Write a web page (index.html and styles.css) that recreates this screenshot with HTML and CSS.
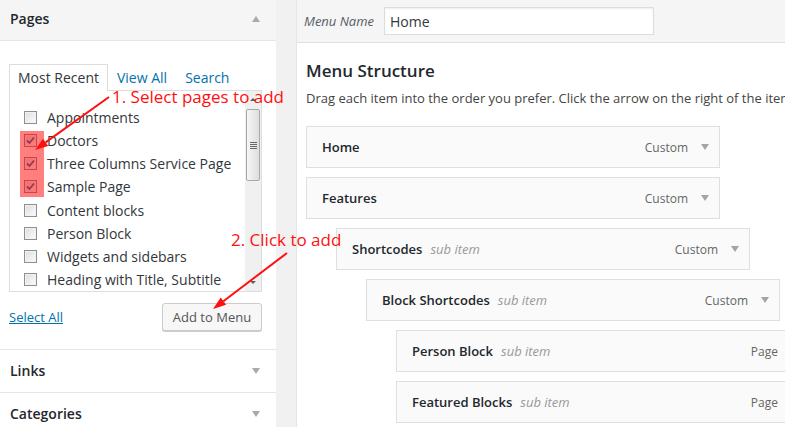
FILE: index.html
```html
<!DOCTYPE html>
<html lang="en">
<head>
<meta charset="utf-8">
<title>Menus</title>
<link rel="stylesheet" href="styles.css">
</head>
<body>
<div class="screen">
  <aside class="sidebar">
    <section class="acc acc-open">
      <h3 class="acc-title"><span>Pages</span><span class="tri tri-up"></span></h3>
      <div class="acc-body">
        <ul class="tabs">
          <li class="tab tab-active">Most Recent</li>
          <li class="tab"><a href="#">View All</a></li>
          <li class="tab"><a href="#">Search</a></li>
        </ul>
        <div class="tab-panel">
          <ul class="checklist">
            <li><span class="cb"></span>Appointments</li>
            <li><span class="cb"><svg class="tick" viewBox="0 0 11 11" width="11" height="11"><path d="M2 5.5 L4.5 8 L9 2.5"/></svg></span>Doctors</li>
            <li><span class="cb"><svg class="tick" viewBox="0 0 11 11" width="11" height="11"><path d="M2 5.5 L4.5 8 L9 2.5"/></svg></span>Three Columns Service Page</li>
            <li><span class="cb"><svg class="tick" viewBox="0 0 11 11" width="11" height="11"><path d="M2 5.5 L4.5 8 L9 2.5"/></svg></span>Sample Page</li>
            <li><span class="cb"></span>Content blocks</li>
            <li><span class="cb"></span>Person Block</li>
            <li><span class="cb"></span>Widgets and sidebars</li>
            <li><span class="cb"></span>Heading with Title, Subtitle</li>
            <li><span class="cb"></span>Features</li>
          </ul>
          <div class="scrollbar">
            <span class="sb-btn sb-up"></span>
            <span class="sb-thumb"><span class="grip"></span></span>
            <span class="sb-track"></span>
            <span class="sb-btn sb-down"></span>
          </div>
        </div>
        <div class="acc-actions">
          <a href="#" class="select-all">Select All</a>
          <button class="btn" type="button">Add to Menu</button>
        </div>
      </div>
    </section>
    <section class="acc">
      <h3 class="acc-title"><span>Links</span><span class="tri tri-down"></span></h3>
    </section>
    <section class="acc">
      <h3 class="acc-title"><span>Categories</span><span class="tri tri-down"></span></h3>
    </section>
  </aside>

  <main class="editor">
    <div class="name-bar">
      <label class="name-label" for="menu-name">Menu Name</label>
      <input class="name-input" id="menu-name" type="text" value="Home">
    </div>
    <div class="structure">
      <h3 class="structure-title">Menu Structure</h3>
      <p class="drag-note">Drag each item into the order you prefer. Click the arrow on the right of the item to reveal additional configuration options.</p>
      <ul class="menu-items">
        <li class="item"><span class="item-title">Home</span><span class="item-type">Custom</span><span class="item-arrow"></span></li>
        <li class="item"><span class="item-title">Features</span><span class="item-type">Custom</span><span class="item-arrow"></span></li>
        <li class="item depth-1"><span class="item-title">Shortcodes</span><span class="sub">sub item</span><span class="item-type">Custom</span><span class="item-arrow"></span></li>
        <li class="item depth-2"><span class="item-title">Block Shortcodes</span><span class="sub">sub item</span><span class="item-type">Custom</span><span class="item-arrow"></span></li>
        <li class="item depth-3"><span class="item-title">Person Block</span><span class="sub">sub item</span><span class="item-type">Page</span><span class="item-arrow"></span></li>
        <li class="item depth-3"><span class="item-title">Featured Blocks</span><span class="sub">sub item</span><span class="item-type">Page</span><span class="item-arrow"></span></li>
      </ul>
    </div>
  </main>

  <div class="highlight"></div>
  <span class="note note-1">1. Select pages to add</span>
  <span class="note note-2">2. Click to add</span>
  <svg class="arrows" width="785" height="427" viewBox="0 0 785 427">
    <line x1="109" y1="97" x2="45.6" y2="142.4"/>
    <polygon points="35,150 48.2,146.1 43,138.7"/>
    <line x1="287" y1="253" x2="223.4" y2="301.2"/>
    <polygon points="213,309 226.1,304.8 220.7,297.6"/>
  </svg>
</div>
</body>
</html>
```

FILE: styles.css
```css
* { box-sizing: border-box; }

html, body { margin: 0; padding: 0; }

body {
  width: 785px;
  height: 427px;
  overflow: hidden;
  background: #f1f1f1;
  font-family: "Open Sans", "Liberation Sans", sans-serif;
  font-size: 13px;
  color: #32373c;
}

.screen {
  position: relative;
  display: flex;
  align-items: flex-start;
  width: 785px;
  height: 427px;
  overflow: hidden;
}

/* ---------- left accordion ---------- */
.sidebar {
  flex: none;
  width: 276px;
  margin-top: -2px;
  background: #fff;
}

.acc { border-bottom: 1px solid #e5e5e5; }

.acc-title {
  display: flex;
  align-items: center;
  justify-content: space-between;
  margin: 0;
  height: 42px;
  padding: 0 16px 0 10px;
  font-size: 14px;
  line-height: 20px;
  font-weight: 600;
  color: #23282d;
}

.acc-open .acc-title {
  height: 43px;
  background: #f5f5f5;
  border-bottom: 1px solid #e5e5e5;
}

.tri {
  width: 0;
  height: 0;
  border-left: 4px solid transparent;
  border-right: 4px solid transparent;
}
.tri-up { border-bottom: 6px solid #a7aaad; }
.tri-down { border-top: 6px solid #a7aaad; }

.acc-body { padding: 23px 14px 18px 9px; }

.tabs {
  position: relative;
  z-index: 1;
  display: flex;
  list-style: none;
  margin: 0 0 -1px;
  padding: 0;
}

.tab {
  padding: 0 8px;
  font-size: 14px;
  line-height: 26px;
  border: 1px solid transparent;
  border-bottom: 0;
  color: #32373c;
}
.tab-active { border-color: #dddddd; background: #fff; }
.tab a { color: #0073aa; text-decoration: none; }

.tab-panel {
  display: flex;
  height: 202px;
  border: 1px solid #dddddd;
  background: #fff;
}

.checklist {
  flex: 1;
  list-style: none;
  margin: 0;
  padding: 15px 0 0 14px;
  overflow: hidden;
}

.checklist li {
  display: flex;
  align-items: center;
  height: 23.15px;
  font-size: 14px;
  white-space: nowrap;
  color: #32373c;
}

.cb {
  flex: none;
  display: flex;
  align-items: center;
  justify-content: center;
  width: 13px;
  height: 13px;
  margin-right: 10px;
  border: 1px solid #8e8f8f;
  background: linear-gradient(135deg, #dcdcdc, #fdfdfd);
  box-shadow: inset 0 0 0 1px #f2f2f2;
}

.tick path {
  fill: none;
  stroke: #2d6fa6;
  stroke-width: 1.8;
}

.scrollbar {
  flex: none;
  width: 16px;
  display: flex;
  flex-direction: column;
  align-items: center;
  background: #f0f0f0;
}

.sb-btn {
  flex: none;
  width: 100%;
  height: 17px;
  display: flex;
  align-items: center;
  justify-content: center;
}
.sb-btn::before {
  content: "";
  width: 0;
  height: 0;
  border-left: 3px solid transparent;
  border-right: 3px solid transparent;
}
.sb-up::before { border-bottom: 3px solid #606060; }
.sb-down::before { border-top: 3px solid #606060; }

.sb-thumb {
  flex: none;
  width: 14px;
  height: 72px;
  margin-top: 1px;
  display: flex;
  align-items: center;
  justify-content: center;
  border: 1px solid #a8a8a8;
  border-radius: 2px;
  background: linear-gradient(to right, #f6f6f6, #dedede);
}

.grip {
  width: 7px;
  height: 7px;
  background: repeating-linear-gradient(to bottom, #6a6a6a 0 1px, transparent 1px 2px);
}

.sb-track { flex: 1; }

.acc-actions {
  display: flex;
  align-items: center;
  justify-content: space-between;
  margin-top: 11px;
}

.select-all {
  color: #0073aa;
  font-size: 13px;
  text-decoration: underline;
}

.btn {
  width: 100px;
  height: 28px;
  padding: 0;
  font-family: "Open Sans", "Liberation Sans", sans-serif;
  font-size: 13px;
  color: #555;
  background: #f7f7f7;
  border: 1px solid #cccccc;
  border-radius: 3px;
  box-shadow: 0 1px 0 #cccccc;
}

/* ---------- right editor ---------- */
.editor {
  flex: none;
  width: 560px;
  height: 427px;
  margin-left: 20px;
  background: #fff;
  border-left: 1px solid #e5e5e5;
}

.name-bar {
  display: flex;
  align-items: center;
  height: 43px;
  padding-left: 7px;
  background: #f5f5f5;
  border-bottom: 1px solid #dfdfdf;
}

.name-label {
  margin-right: 10px;
  font-size: 13px;
  font-style: italic;
  color: #555d66;
}

.name-input {
  width: 270px;
  height: 28px;
  padding: 0 5px;
  font-family: "Open Sans", "Liberation Sans", sans-serif;
  font-size: 14px;
  color: #32373c;
  background: #fff;
  border: 1px solid #dddddd;
  box-shadow: inset 0 1px 2px rgba(0, 0, 0, 0.07);
  outline: none;
}

.structure { padding: 16px 0 0 9px; }

.structure-title {
  margin: 0;
  font-size: 17px;
  line-height: 24px;
  font-weight: 600;
  color: #23282d;
}

.drag-note {
  margin: 5px 0 0;
  font-size: 13px;
  line-height: 20px;
  white-space: nowrap;
  color: #444;
}

.menu-items {
  list-style: none;
  margin: 18px 0 0;
  padding: 0;
}

.item {
  display: flex;
  align-items: center;
  width: 414px;
  height: 42px;
  margin-bottom: 9px;
  padding: 0 10px 0 15px;
  background: #fafafa;
  border: 1px solid #dfdfdf;
  white-space: nowrap;
}
.depth-1 { margin-left: 30px; }
.depth-2 { margin-left: 60px; }
.depth-3 { margin-left: 90px; }

.item-title {
  font-size: 13px;
  font-weight: 600;
  color: #23282d;
}

.sub {
  margin-left: 8px;
  font-size: 13px;
  font-style: italic;
  color: #999;
}

.item-type {
  margin-left: auto;
  font-size: 12px;
  color: #666;
}

.item-arrow {
  flex: none;
  margin-left: 13px;
  width: 0;
  height: 0;
  border-left: 4px solid transparent;
  border-right: 4px solid transparent;
  border-top: 6px solid #a0a5aa;
}

/* ---------- annotations ---------- */
.highlight {
  position: absolute;
  left: 20px;
  top: 131px;
  width: 24px;
  height: 66px;
  background: rgba(255, 0, 0, 0.5);
}

.note {
  position: absolute;
  font-family: "Open Sans", "Liberation Sans", sans-serif;
  font-size: 17px;
  line-height: 20px;
  color: #ff1010;
  white-space: nowrap;
}
.note-1 { left: 112px; top: 87px; }
.note-2 { left: 231px; top: 230px; }

.arrows {
  position: absolute;
  left: 0;
  top: 0;
  pointer-events: none;
}
.arrows line { stroke: #ff1010; stroke-width: 2; }
.arrows polygon { fill: #ff1010; }
```
